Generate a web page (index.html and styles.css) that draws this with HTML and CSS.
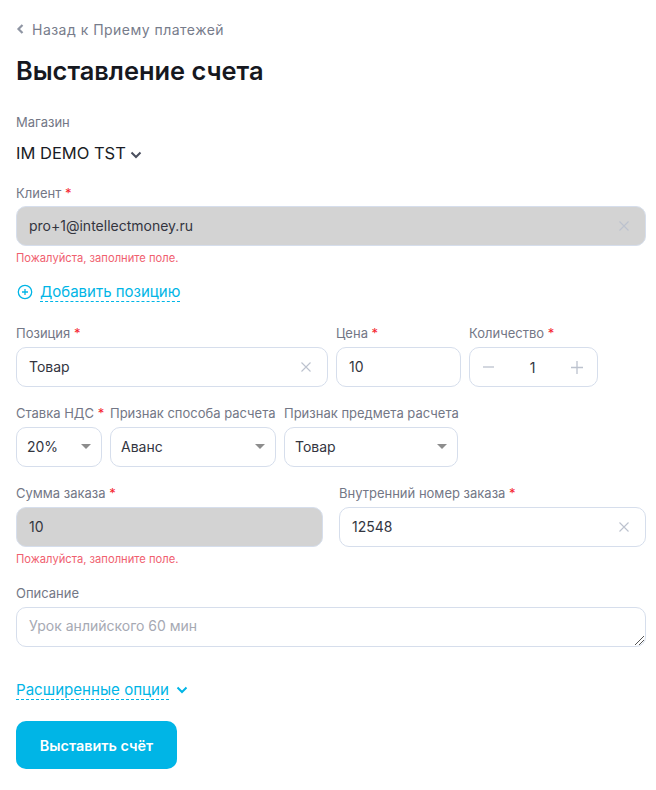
FILE: index.html
```html
<!DOCTYPE html>
<html lang="ru">
<head>
<meta charset="utf-8">
<title>Выставление счета</title>
<link rel="stylesheet" href="styles.css">
</head>
<body>
<main class="page">
  <a class="back"><svg class="back-icon" width="8" height="10" viewBox="0 0 8 10"><path d="M6.500 1 2.500 5l4 4" fill="none" stroke="#8f95a3" stroke-width="2.200"/></svg><span>Назад к Приему платежей</span></a>
  <h1 class="title">Выставление счета</h1>

  <div class="label shop-label">Магазин</div>
  <div class="shop"><span>IM DEMO TST</span><svg width="12" height="8" viewBox="0 0 12 8"><path d="M1.500 1.500 6 6l4.500-4.500" fill="none" stroke="#4a4f5e" stroke-width="2"/></svg></div>

  <div class="label client-label">Клиент <b class="req">*</b></div>
  <div class="box disabled"><span class="value">pro+1@intellectmoney.ru</span><svg class="clear" width="10" height="10" viewBox="0 0 10 10"><path d="M.5.5l9 9M9.500.5l-9 9" stroke="#bcc2ce" stroke-width="1.100"/></svg></div>
  <div class="error">Пожалуйста, заполните поле.</div>

  <div class="add"><svg width="16" height="16" viewBox="0 0 16 16"><circle cx="8" cy="8" r="6.700" fill="none" stroke="#00b5e6" stroke-width="1.300"/><path d="M8 5v6M5 8h6" stroke="#00b5e6" stroke-width="1.300"/></svg><span class="dashed">Добавить позицию</span></div>

  <div class="row row-position">
    <div class="field f-pos"><div class="label">Позиция <b class="req">*</b></div><div class="box"><span class="value">Товар</span><svg class="clear" width="10" height="10" viewBox="0 0 10 10"><path d="M.5.5l9 9M9.500.5l-9 9" stroke="#bcc2ce" stroke-width="1.100"/></svg></div></div>
    <div class="field f-price"><div class="label">Цена <b class="req">*</b></div><div class="box"><span class="value">10</span></div></div>
    <div class="field f-qty"><div class="label">Количество <b class="req">*</b></div><div class="box qty"><svg width="11" height="12" viewBox="0 0 11 12"><path d="M0 6h11" stroke="#bcc2ce" stroke-width="1.300"/></svg><span class="value">1</span><svg width="12" height="13" viewBox="0 0 12 13"><path d="M0 6.500h12M6 0v13" stroke="#bcc2ce" stroke-width="1.300"/></svg></div></div>
  </div>

  <div class="row row-tax">
    <div class="field f-vat"><div class="label">Ставка НДС <b class="req">*</b></div><div class="box select"><span class="value">20%</span><i class="caret"></i></div></div>
    <div class="field f-method"><div class="label">Признак способа расчета</div><div class="box select"><span class="value">Аванс</span><i class="caret"></i></div></div>
    <div class="field f-subject"><div class="label">Признак предмета расчета</div><div class="box select"><span class="value">Товар</span><i class="caret"></i></div></div>
  </div>

  <div class="row row-sum">
    <div class="field f-half"><div class="label">Сумма заказа <b class="req">*</b></div><div class="box disabled"><span class="value">10</span></div><div class="error">Пожалуйста, заполните поле.</div></div>
    <div class="field f-half"><div class="label">Внутренний номер заказа <b class="req">*</b></div><div class="box"><span class="value">12548</span><svg class="clear" width="10" height="10" viewBox="0 0 10 10"><path d="M.5.5l9 9M9.500.5l-9 9" stroke="#bcc2ce" stroke-width="1.100"/></svg></div></div>
  </div>

  <div class="label desc-label">Описание</div>
  <div class="box textarea"><span class="placeholder">Урок анлийского 60 мин</span><svg class="grip" width="9" height="9" viewBox="0 0 9 9"><path d="M0 9 9 0M4 9l5-5" stroke="#555" stroke-width="1"/></svg></div>

  <div class="more"><span class="dashed">Расширенные опции</span><svg width="12" height="8" viewBox="0 0 12 8"><path d="M1.500 1.500 6 6l4.500-4.500" fill="none" stroke="#00b5e6" stroke-width="2"/></svg></div>

  <button class="submit" type="button">Выставить счёт</button>
</main>
</body>
</html>
```
FILE: styles.css
```css
* { box-sizing: border-box; }
html, body { margin: 0; padding: 0; background: #fff; }
body { font-family: Inter, "Noto Sans", sans-serif; color: #1a1c24; }
.page { width: 656px; height: 790px; padding: 19px 10px 0 16px; overflow: hidden; }
.back { display: flex; align-items: center; gap: 8px; height: 20px; font-size: 14px; letter-spacing: .48px; color: #777c8b; }
.title { margin: 16px 0 0; font-size: 25.400px; line-height: 32px; font-weight: 600; color: #16181f; }
.label { font-size: 13px; line-height: 18px; height: 18px; color: #737786; white-space: nowrap; }
.req { color: #f5222d; font-weight: 400; }
.shop-label { margin-top: 26px; }
.shop { display: flex; align-items: center; gap: 4px; margin-top: 10px; height: 24px; font-size: 16.500px; color: #1a1c24; }
.shop svg { margin-top: 3px; }
.client-label { margin-top: 19px; height: 17px; }
.box { display: flex; align-items: center; height: 40px; margin-top: 5px; padding: 0 16px 1px 12px; background: #fff; border: 1px solid #d6deec; border-radius: 10px; font-size: 14px; }
.value { flex: 1; color: #33353f; }
.disabled { background: #d3d3d3; }
.error { margin-top: 6px; height: 12px; font-size: 11.200px; line-height: 12px; color: #f0606f; }
.add { display: flex; align-items: center; gap: 7px; margin-top: 16px; height: 24px; font-size: 15px; color: #00b5e6; padding-left: 1px; }
.dashed { border-bottom: 1px dashed #00b5e6; line-height: 18px; height: 19px; }
.row { display: flex; gap: 8px; }
.row-position { margin-top: 20px; }
.row-tax { margin-top: 17px; }
.row-sum { margin-top: 17px; gap: 16px; height: 83px; }
.f-pos { width: 312px; }
.f-price { width: 125px; }
.f-qty { width: 129px; }
.f-vat { width: 86px; }
.f-method { width: 166px; }
.f-subject { width: 174px; }
.f-half { width: 307px; }
.row-tax .box { padding: 0 10px 1px 10px; }
.qty { padding: 0 14px 0 13px; gap: 12px; }
.qty .value { text-align: center; }
.caret { width: 0; height: 0; border-left: 5px solid transparent; border-right: 5px solid transparent; border-top: 5px solid #8d8d8d; }
.desc-label { margin-top: 17px; }
.textarea { position: relative; padding-bottom: 3px; }
.placeholder { color: #a6a9b3; }
.grip { position: absolute; right: 1px; bottom: 1px; }
.more { display: flex; align-items: center; gap: 7px; margin-top: 31px; height: 24px; font-size: 15.100px; color: #00b5e6; }
.submit { display: block; width: 161px; height: 48px; margin-top: 19px; border: 0; border-radius: 10px; background: #00b5e6; color: #fff; font: 600 14.400px Inter, "Noto Sans", sans-serif; }
```
